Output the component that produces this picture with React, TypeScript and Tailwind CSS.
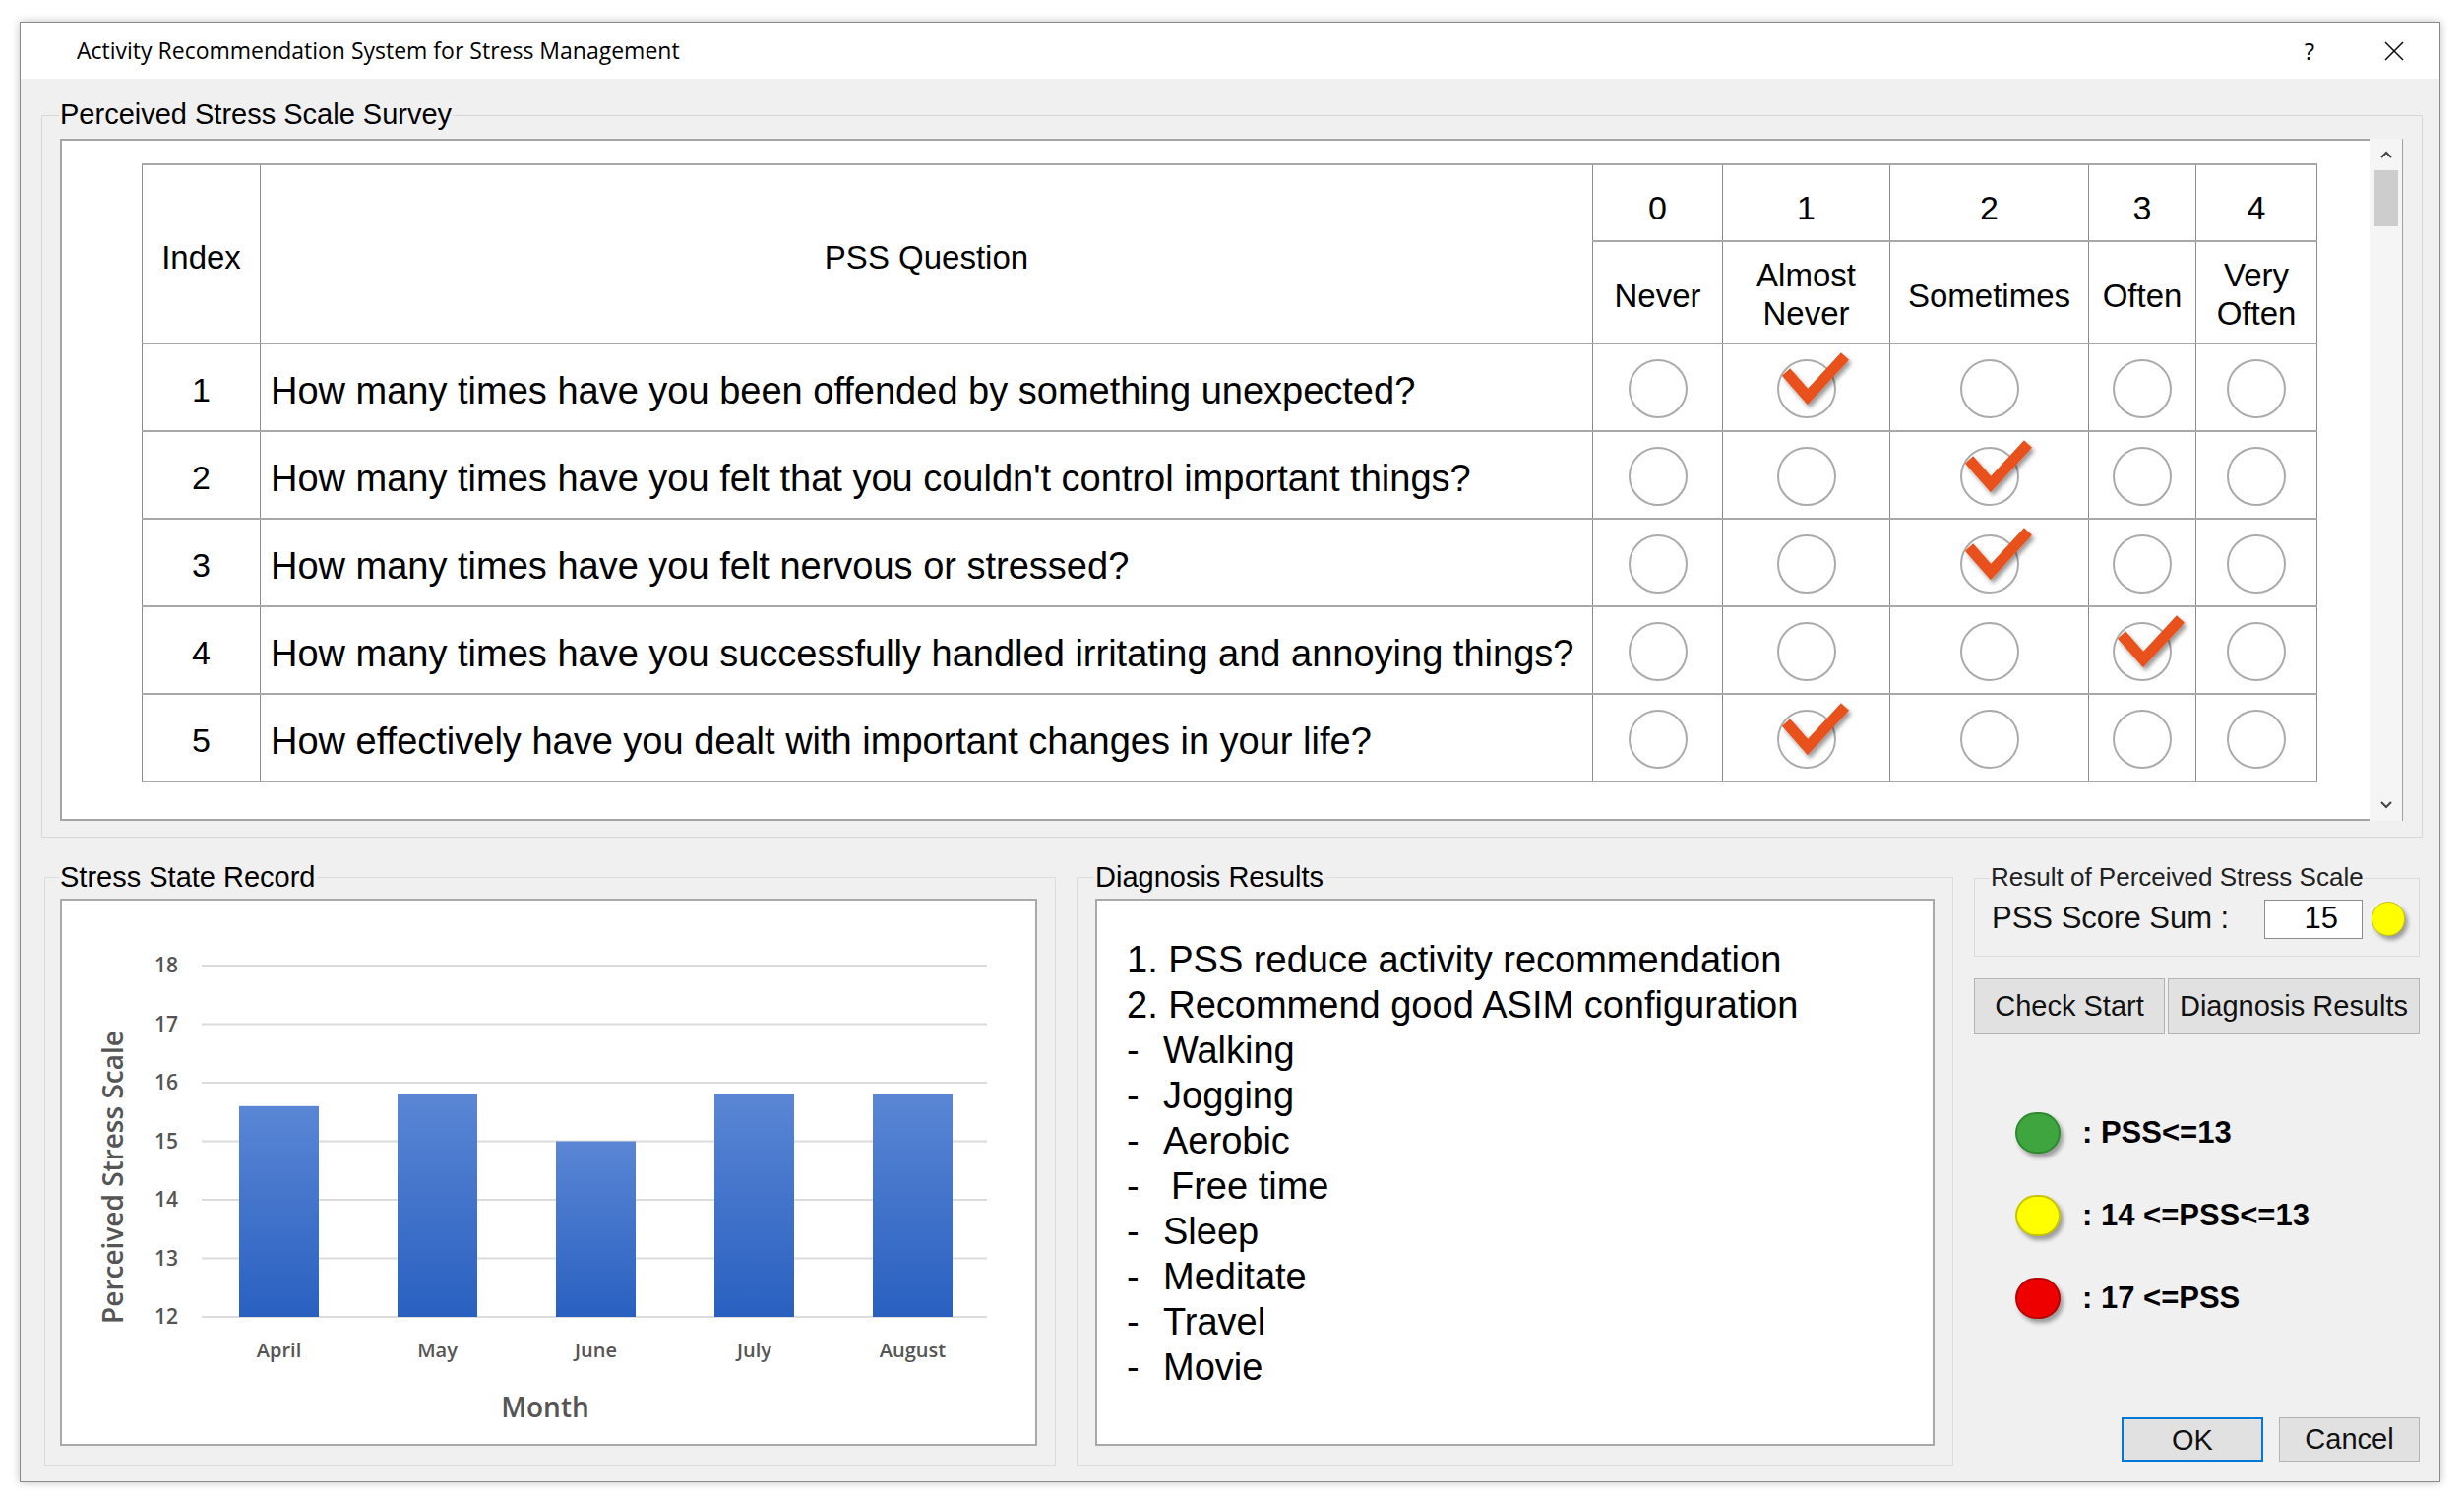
import React from "react";

const F = "font-['Liberation_Sans',Arial,Helvetica,sans-serif]";

function Check({ id }: { id: string }) {
  return (
    <svg
      className="pointer-events-none absolute left-[-12px] top-[-32px] overflow-visible"
      width="100"
      height="80"
      viewBox="0 0 100 80"
    >
      <defs>
        <filter id={id} x="-30%" y="-30%" width="170%" height="170%">
          <feDropShadow dx="2.5" dy="3.5" stdDeviation="2" floodColor="#000000" floodOpacity="0.4" />
        </filter>
      </defs>
      <polyline
        points="19,43 41,68 79,27"
        fill="none"
        stroke="#e8511d"
        strokeWidth="11"
        strokeLinejoin="miter"
        strokeLinecap="butt"
        filter={`url(#${id})`}
      />
    </svg>
  );
}

function Radio({ checked, id }: { checked: boolean; id: string }) {
  return (
    <div className="relative mx-auto h-[60px] w-[60px] rounded-full border-2 border-[#ababab] bg-white">
      {checked && <Check id={id} />}
    </div>
  );
}

const questions = [
  "How many times have you been offended by something unexpected?",
  "How many times have you felt that you couldn't control important things?",
  "How many times have you felt nervous or stressed?",
  "How many times have you successfully handled irritating and annoying things?",
  "How effectively have you dealt with important changes in your life?",
];
const answers = [1, 2, 2, 3, 1];

const cell = "border-x border-x-[#8c8c8c] border-y-2 border-y-[#a8a8a8]";

function SurveyTable() {
  return (
    <table className={`table-fixed border-collapse ${F} text-black`}>
      <colgroup>
        <col className="w-[120px]" />
        <col className="w-[1354px]" />
        <col className="w-[132px]" />
        <col className="w-[170px]" />
        <col className="w-[202px]" />
        <col className="w-[109px]" />
        <col className="w-[123px]" />
      </colgroup>
      <thead>
        <tr className="h-[78px]">
          <th rowSpan={2} className={`${cell} pt-[8px] text-center text-[33px] font-normal`}>
            Index
          </th>
          <th rowSpan={2} className={`${cell} pt-[8px] text-center text-[33px] font-normal`}>
            PSS Question
          </th>
          {["0", "1", "2", "3", "4"].map((d) => (
            <th key={d} className={`${cell} pt-[10px] text-center text-[34px] font-normal`}>
              {d}
            </th>
          ))}
        </tr>
        <tr className="h-[104px]">
          <th className={`${cell} pt-[8px] text-center text-[33px] font-normal leading-[40px]`}>Never</th>
          <th className={`${cell} pt-[4px] text-center text-[33px] font-normal leading-[39px]`}>
            Almost
            <br />
            Never
          </th>
          <th className={`${cell} pt-[8px] text-center text-[33px] font-normal leading-[40px]`}>Sometimes</th>
          <th className={`${cell} pt-[8px] text-center text-[33px] font-normal leading-[40px]`}>Often</th>
          <th className={`${cell} pt-[4px] text-center text-[33px] font-normal leading-[39px]`}>
            Very
            <br />
            Often
          </th>
        </tr>
      </thead>
      <tbody>
        {questions.map((q, i) => (
          <tr key={i} className="h-[89px]">
            <td className={`${cell} pt-[6px] text-center text-[34px]`}>{i + 1}</td>
            <td className={`${cell} whitespace-nowrap pl-[10px] pt-[8px] text-[38px]`}>{q}</td>
            {[0, 1, 2, 3, 4].map((c) => (
              <td key={c} className={`${cell} pt-[3px] text-center`}>
                <Radio checked={answers[i] === c} id={`chk-${i}-${c}`} />
              </td>
            ))}
          </tr>
        ))}
      </tbody>
    </table>
  );
}

function Chart() {
  const grid = [18, 17, 16, 15, 14, 13, 12];
  const y = (v: number) => 423 - (v - 12) * 59.5;
  const bars = [
    { m: "April", v: 15.6 },
    { m: "May", v: 15.8 },
    { m: "June", v: 15.0 },
    { m: "July", v: 15.8 },
    { m: "August", v: 15.8 },
  ];
  const font = { fontFamily: "'Open Sans', 'Noto Sans', sans-serif", fontWeight: 600 };
  return (
    <svg width="989" height="552" viewBox="0 0 989 552">
      <defs>
        <linearGradient id="barg" x1="0" y1="0" x2="0" y2="1">
          <stop offset="0" stopColor="#5a86d5" />
          <stop offset="1" stopColor="#2960c0" />
        </linearGradient>
      </defs>
      {grid.map((g) => (
        <g key={g}>
          <line x1={142} x2={940} y1={y(g)} y2={y(g)} stroke="#dcdcdc" strokeWidth="2" />
          <text x={118} y={y(g) + 7} textAnchor="end" fontSize="21" fill="#555555" style={font}>
            {g}
          </text>
        </g>
      ))}
      {bars.map((b, i) => {
        const x = 180 + i * 161;
        return (
          <g key={b.m}>
            <rect x={x} y={y(b.v)} width={81} height={423 - y(b.v)} fill="url(#barg)" />
            <text x={x + 40.5} y={464} textAnchor="middle" fontSize="20" fill="#555555" style={font}>
              {b.m}
            </text>
          </g>
        );
      })}
      <text x={491} y={525} textAnchor="middle" fontSize="28" fill="#555555" style={font}>
        Month
      </text>
      <text
        x={0}
        y={0}
        textAnchor="middle"
        fontSize="28"
        fill="#555555"
        style={font}
        transform="translate(62 281) rotate(-90)"
      >
        Perceived Stress Scale
      </text>
    </svg>
  );
}

function Dot({ color }: { color: "green" | "yellow" | "red" }) {
  const cls =
    color === "green"
      ? "bg-[#3fa53f] border-[#2f8a2f]"
      : color === "yellow"
      ? "bg-[#ffff00] border-[#c9c400]"
      : "bg-[#ee0000] border-[#b80000]";
  return (
    <div
      className={`h-[42px] w-[46px] rounded-full border-2 shadow-[3px_4px_4px_rgba(0,0,0,0.35)] ${cls}`}
    />
  );
}

export default function App() {
  const diag = ["Walking", "Jogging", "Aerobic", "Free time", "Sleep", "Meditate", "Travel", "Movie"];
  return (
    <div className="h-[1525px] w-[2504px] overflow-hidden bg-white pl-[20px] pt-[22px]">
      <div className="flex h-[1484px] w-[2460px] flex-col border border-[#8a8a8a] bg-[#f0f0f0] shadow-[0_0_8px_rgba(0,0,0,0.25)]">
        {/* Title bar */}
        <div className="flex h-[57px] shrink-0 items-center bg-white pl-[57px]">
          <span className="font-['Open_Sans','Noto_Sans',sans-serif] text-[23px] text-black">
            Activity Recommendation System for Stress Management
          </span>
          <span className="ml-auto mr-[70px] font-['Open_Sans','Noto_Sans',sans-serif] text-[24px] text-black">
            ?
          </span>
          <svg className="mr-[35px]" width="22" height="22" viewBox="0 0 22 22">
            <line x1="2" y1="2" x2="20" y2="20" stroke="#111" strokeWidth="1.6" />
            <line x1="20" y1="2" x2="2" y2="20" stroke="#111" strokeWidth="1.6" />
          </svg>
        </div>

        {/* Survey group */}
        <div className="relative ml-[21px] mt-[37px] h-[734px] w-[2420px] shrink-0 border border-[#d8d8d8]">
          <span
            className={`absolute left-[17px] top-[-19px] bg-[#f0f0f0] px-[1px] text-[29px] leading-[34px] text-black ${F}`}
          >
            Perceived Stress Scale Survey
          </span>
          <div className="ml-[18px] mt-[23px] flex h-[693px] w-[2381px]">
            <div className="h-full w-[2347px] border-2 border-r-0 border-[#a5a5a5] bg-white pl-[81px] pt-[23px]">
              <SurveyTable />
            </div>
            <div className="flex h-full w-[34px] flex-col items-center border-r border-[#a0a0a0] bg-[#f5f5f5]">
              <svg className="mt-[12px]" width="12" height="8" viewBox="0 0 12 8">
                <polyline points="1,7 6,2 11,7" fill="none" stroke="#444" strokeWidth="2" />
              </svg>
              <div className="mt-[12px] h-[57px] w-[24px] bg-[#cdcdcd]" />
              <div className="flex-1" />
              <svg className="mb-[12px]" width="12" height="8" viewBox="0 0 12 8">
                <polyline points="1,1 6,6 11,1" fill="none" stroke="#444" strokeWidth="2" />
              </svg>
            </div>
          </div>
        </div>

        {/* Bottom row */}
        <div className="ml-[24px] mt-[40px] flex h-[598px] shrink-0 gap-[21px]">
          {/* Stress State Record */}
          <div className="relative h-full w-[1028px] border border-[#dcdcdc]">
            <span
              className={`absolute left-[14px] top-[-18px] bg-[#f0f0f0] px-[1px] text-[29px] leading-[34px] text-black ${F}`}
            >
              Stress State Record
            </span>
            <div className="ml-[15px] mt-[21px] h-[556px] w-[993px] border-2 border-[#a9a9a9] bg-white">
              <Chart />
            </div>
          </div>

          {/* Diagnosis Results */}
          <div className="relative h-full w-[891px] border border-[#dcdcdc]">
            <span
              className={`absolute left-[17px] top-[-18px] bg-[#f0f0f0] px-[1px] text-[29px] leading-[34px] text-black ${F}`}
            >
              Diagnosis Results
            </span>
            <div
              className={`ml-[18px] mt-[21px] h-[556px] w-[853px] border-2 border-[#a9a9a9] bg-white pl-[30px] pt-[37px] text-[38px] leading-[46px] text-black ${F}`}
            >
              <div>1. PSS reduce activity recommendation</div>
              <div>2. Recommend good ASIM configuration</div>
              {diag.map((d) => (
                <div key={d} className="flex">
                  <span className="w-[37px]">-</span>
                  <span className={d === "Free time" ? "ml-[8px]" : ""}>{d}</span>
                </div>
              ))}
            </div>
          </div>

          {/* Right column */}
          <div className={`flex h-full w-[453px] flex-col ${F} text-black`}>
            <div className="relative mt-[1px] h-[80px] w-full shrink-0 border border-[#dcdcdc]">
              <span className="absolute left-[15px] top-[-17px] bg-[#f0f0f0] px-[1px] text-[26px] leading-[30px] text-[#222]">
                Result of Perceived Stress Scale
              </span>
              <div className="flex h-full items-center pl-[17px] pt-[3px]">
                <span className="flex-1 whitespace-pre text-[31px] text-[#111]">PSS Score Sum :</span>
                <div className="flex h-[40px] w-[100px] items-center justify-end border border-[#8c8c8c] bg-white pr-[24px] text-[31px]">
                  15
                </div>
                <div className="ml-[9px] mr-[14px] h-[35px] w-[34px] rounded-full border border-[#c9c400] bg-[#ffff00] shadow-[3px_4px_4px_rgba(0,0,0,0.35)]" />
              </div>
            </div>

            <div className="mt-[22px] flex h-[57px] shrink-0 gap-[3px]">
              <button className="h-full w-[194px] border border-[#b4b4b4] bg-[#e1e1e1] text-[29px] text-[#111]">
                Check Start
              </button>
              <button className="h-full flex-1 border border-[#b4b4b4] bg-[#e1e1e1] text-[29px] text-[#111]">
                Diagnosis Results
              </button>
            </div>

            <div className="ml-[42px] mt-[79px] flex flex-col gap-[42px]">
              <div className="flex h-[42px] items-center">
                <Dot color="green" />
                <span className="ml-[22px] text-[31px] font-bold">: PSS&lt;=13</span>
              </div>
              <div className="flex h-[42px] items-center">
                <Dot color="yellow" />
                <span className="ml-[22px] text-[31px] font-bold">: 14 &lt;=PSS&lt;=13</span>
              </div>
              <div className="flex h-[42px] items-center">
                <Dot color="red" />
                <span className="ml-[22px] text-[31px] font-bold">: 17 &lt;=PSS</span>
              </div>
            </div>

            <div className="mt-[100px] flex justify-end gap-[16px]">
              <button className="h-[45px] w-[144px] border-2 border-[#0078d7] bg-[#e1e1e1] text-[29px] text-[#111]">
                OK
              </button>
              <button className="h-[45px] w-[143px] border border-[#b4b4b4] bg-[#e1e1e1] text-[29px] text-[#111]">
                Cancel
              </button>
            </div>
          </div>
        </div>
      </div>
    </div>
  );
}
